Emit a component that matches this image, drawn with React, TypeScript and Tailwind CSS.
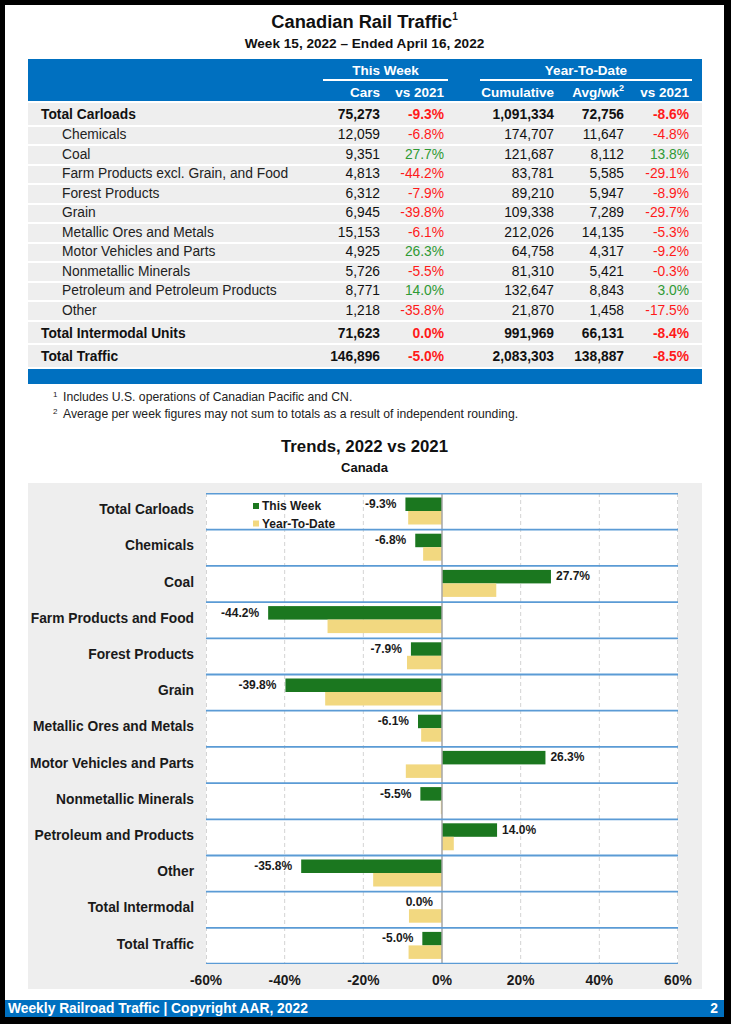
import React from 'react';

interface Row {
  label: string;
  cars: string;
  vs: string;
  cum: string;
  avg: string;
  vsYtd: string;
  total?: boolean;
}

const rows: Row[] = [
  { label: 'Total Carloads', cars: '75,273', vs: '-9.3%', cum: '1,091,334', avg: '72,756', vsYtd: '-8.6%', total: true },
  { label: 'Chemicals', cars: '12,059', vs: '-6.8%', cum: '174,707', avg: '11,647', vsYtd: '-4.8%' },
  { label: 'Coal', cars: '9,351', vs: '27.7%', cum: '121,687', avg: '8,112', vsYtd: '13.8%' },
  { label: 'Farm Products excl. Grain, and Food', cars: '4,813', vs: '-44.2%', cum: '83,781', avg: '5,585', vsYtd: '-29.1%' },
  { label: 'Forest Products', cars: '6,312', vs: '-7.9%', cum: '89,210', avg: '5,947', vsYtd: '-8.9%' },
  { label: 'Grain', cars: '6,945', vs: '-39.8%', cum: '109,338', avg: '7,289', vsYtd: '-29.7%' },
  { label: 'Metallic Ores and Metals', cars: '15,153', vs: '-6.1%', cum: '212,026', avg: '14,135', vsYtd: '-5.3%' },
  { label: 'Motor Vehicles and Parts', cars: '4,925', vs: '26.3%', cum: '64,758', avg: '4,317', vsYtd: '-9.2%' },
  { label: 'Nonmetallic Minerals', cars: '5,726', vs: '-5.5%', cum: '81,310', avg: '5,421', vsYtd: '-0.3%' },
  { label: 'Petroleum and Petroleum Products', cars: '8,771', vs: '14.0%', cum: '132,647', avg: '8,843', vsYtd: '3.0%' },
  { label: 'Other', cars: '1,218', vs: '-35.8%', cum: '21,870', avg: '1,458', vsYtd: '-17.5%' },
  { label: 'Total Intermodal Units', cars: '71,623', vs: '0.0%', cum: '991,969', avg: '66,131', vsYtd: '-8.4%', total: true },
  { label: 'Total Traffic', cars: '146,896', vs: '-5.0%', cum: '2,083,303', avg: '138,887', vsYtd: '-8.5%', total: true },
];

const trends: { label: string; week: number; ytd: number }[] = [
  { label: 'Total Carloads', week: -9.3, ytd: -8.6 },
  { label: 'Chemicals', week: -6.8, ytd: -4.8 },
  { label: 'Coal', week: 27.7, ytd: 13.8 },
  { label: 'Farm Products and Food', week: -44.2, ytd: -29.1 },
  { label: 'Forest Products', week: -7.9, ytd: -8.9 },
  { label: 'Grain', week: -39.8, ytd: -29.7 },
  { label: 'Metallic Ores and Metals', week: -6.1, ytd: -5.3 },
  { label: 'Motor Vehicles and Parts', week: 26.3, ytd: -9.2 },
  { label: 'Nonmetallic Minerals', week: -5.5, ytd: -0.3 },
  { label: 'Petroleum and Products', week: 14.0, ytd: 3.0 },
  { label: 'Other', week: -35.8, ytd: -17.5 },
  { label: 'Total Intermodal', week: 0.0, ytd: -8.4 },
  { label: 'Total Traffic', week: -5.0, ytd: -8.5 },
];

const ticks = ['-60%', '-40%', '-20%', '0%', '20%', '40%', '60%'];

const gridCols = 'grid grid-cols-[292px_60px_64px_110px_70px_65px_13px] items-center';

const pctClass = (v: string, total?: boolean) => {
  if (total || v.startsWith('-') || v === '0.0%') return 'text-[#ff1a1a]';
  return 'text-[#2f9a34]';
};

const TableRow: React.FC<{ row: Row }> = ({ row }) => {
  const h = row.total ? 'h-[21.5px] pt-[3px] font-bold' : 'h-[17.5px]';
  return (
    <div className={`${gridCols} ${h} mt-[2px] bg-[#eeeeee] text-[13.8px] leading-none`}>
      <div className={row.total ? 'pl-[13px] text-[#111]' : 'pl-[34px] text-[#222]'}>{row.label}</div>
      <div className="text-right">{row.cars}</div>
      <div className={`text-right ${pctClass(row.vs, row.total)}`}>{row.vs}</div>
      <div className="text-right">{row.cum}</div>
      <div className="text-right">{row.avg}</div>
      <div className={`text-right ${pctClass(row.vsYtd, row.total)}`}>{row.vsYtd}</div>
      <div />
    </div>
  );
};

// plot geometry in px
const PW = 472;
const ROW = 36.2;
const PH = ROW * trends.length;
const ZERO = 236;
const SCALE = 236 / 60;
const FONT = "'Liberation Sans', Arial, sans-serif";

const TrendChart: React.FC = () => (
  <svg width={PW} height={PH + 1} className="block shrink-0">
    <rect x={0} y={0} width={PW} height={PH} fill="#ffffff" />
    {[0, 1, 2, 4, 5, 6].map((k) => (
      <line
        key={k}
        x1={k * (PW / 6) + (k === 0 ? 0.5 : k === 6 ? -0.5 : 0)}
        x2={k * (PW / 6) + (k === 0 ? 0.5 : k === 6 ? -0.5 : 0)}
        y1={0}
        y2={PH}
        stroke="#d4d4d4"
        strokeWidth={1}
        strokeDasharray="4 3"
      />
    ))}
    {trends.map((d, i) => {
      const y0 = i * ROW;
      const wx = d.week < 0 ? ZERO + d.week * SCALE : ZERO;
      const yx = d.ytd < 0 ? ZERO + d.ytd * SCALE : ZERO;
      const end = ZERO + d.week * SCALE;
      const left = d.week <= 0;
      return (
        <g key={d.label}>
          <rect x={wx} y={y0 + 4.5} width={Math.abs(d.week) * SCALE} height={13.5} fill="#1b771f" />
          <rect x={yx} y={y0 + 18} width={Math.abs(d.ytd) * SCALE} height={13.5} fill="#f2d880" />
          <text
            x={left ? end - 9 : end + 5}
            y={y0 + 11}
            textAnchor={left ? 'end' : 'start'}
            dominantBaseline="central"
            fontSize={12}
            fontWeight="bold"
            fill="#1a1a1a"
            fontFamily={FONT}
          >
            {d.week.toFixed(1)}%
          </text>
        </g>
      );
    })}
    <line x1={ZERO} x2={ZERO} y1={0} y2={PH} stroke="#a6a6a6" strokeWidth={1.5} />
    {trends.map((_, i) => (
      <line key={i} x1={0} x2={PW} y1={i * ROW + 0.5} y2={i * ROW + 0.5} stroke="#5b9bd5" strokeWidth={1.8} />
    ))}
    <line x1={0} x2={PW} y1={PH} y2={PH} stroke="#5b9bd5" strokeWidth={1.8} />
    <rect x={47} y={10} width={6} height={6} fill="#1b771f" />
    <text x={56} y={13} dominantBaseline="central" fontSize={12} fontWeight="bold" fill="#1a1a1a" fontFamily={FONT}>
      This Week
    </text>
    <rect x={47} y={27.5} width={6} height={6} fill="#f2d880" />
    <text x={56} y={30.5} dominantBaseline="central" fontSize={12} fontWeight="bold" fill="#1a1a1a" fontFamily={FONT}>
      Year-To-Date
    </text>
  </svg>
);

const App: React.FC = () => {
  return (
    <div className="w-[731px] h-[1024px] bg-black pt-[5px] pl-[5px]">
      <div className="w-[719px] h-[1012px] bg-white flex flex-col font-['Liberation_Sans',Arial,sans-serif] text-[#111]">
        {/* Title */}
        <h1 className="mt-[6px] text-center text-[18.3px] leading-[22px] font-bold">
          Canadian Rail Traffic<sup className="text-[10px] -top-[0.8em]">1</sup>
        </h1>
        <div className="mt-[2px] text-center text-[13.6px] leading-[17px] font-bold">
          Week 15, 2022 – Ended April 16, 2022
        </div>

        {/* Table */}
        <div className="mx-[23px] mt-[7px] w-[674px]">
          <div className="bg-[#0070c0] h-[42px] text-white font-bold text-[13.5px]">
            <div className="flex h-[22px]">
              <div className="w-[295px]" />
              <div className="w-[125px] pt-[3px] border-b-2 border-white text-center leading-[17px]">This Week</div>
              <div className="w-[32px]" />
              <div className="w-[212px] pt-[3px] border-b-2 border-white text-center leading-[17px]">Year-To-Date</div>
            </div>
            <div className={`${gridCols} h-[20px] pt-[3px] leading-[17px]`}>
              <div />
              <div className="text-right">Cars</div>
              <div className="text-right">vs 2021</div>
              <div className="text-right">Cumulative</div>
              <div className="text-right">
                Avg/wk<sup className="text-[9px] -top-[0.7em]">2</sup>
              </div>
              <div className="text-right">vs 2021</div>
              <div />
            </div>
          </div>
          {rows.map((r) => (
            <TableRow key={r.label} row={r} />
          ))}
          <div className="mt-[2px] h-[15px] bg-[#0070c0]" />
        </div>

        {/* Footnotes */}
        <div className="mt-[5px] pl-[48px] text-[12.2px] leading-[17.5px] text-[#222]">
          <div className="flex">
            <span className="w-[10px] text-[8px] leading-[12px]">1</span>
            <span>Includes U.S. operations of Canadian Pacific and CN.</span>
          </div>
          <div className="flex">
            <span className="w-[10px] text-[8px] leading-[12px]">2</span>
            <span>Average per week figures may not sum to totals as a result of independent rounding.</span>
          </div>
        </div>

        {/* Chart */}
        <h2 className="mt-[13px] text-center text-[16.8px] leading-[20px] font-bold">Trends, 2022 vs 2021</h2>
        <div className="mt-[3px] text-center text-[13px] leading-[16px] font-bold">Canada</div>

        <div className="mx-[23px] mt-[7.5px] w-[674px] h-[506px] bg-[#eeeeee] pt-[9.5px]">
          <div className="flex">
            <div className="w-[178px] shrink-0 flex flex-col">
              {trends.map((t) => (
                <div
                  key={t.label}
                  className="h-[36.2px] flex items-center justify-end pr-[12px] text-[13.8px] font-bold text-[#1a1a1a]"
                >
                  {t.label}
                </div>
              ))}
            </div>
            <TrendChart />
          </div>
          <div className="flex ml-[138.67px] mt-[9px]">
            {ticks.map((t) => (
              <div key={t} className="w-[78.67px] shrink-0 text-center text-[13.8px] leading-[16px] font-bold text-[#1a1a1a]">
                {t}
              </div>
            ))}
          </div>
        </div>

        {/* Footer */}
        <div className="mt-auto h-[17px] bg-[#0070c0] flex items-center justify-between pl-[3px] pr-[6px] text-white font-bold text-[13.8px] leading-none">
          <span>Weekly Railroad Traffic | Copyright AAR, 2022</span>
          <span>2</span>
        </div>
      </div>
    </div>
  );
};

export default App;
